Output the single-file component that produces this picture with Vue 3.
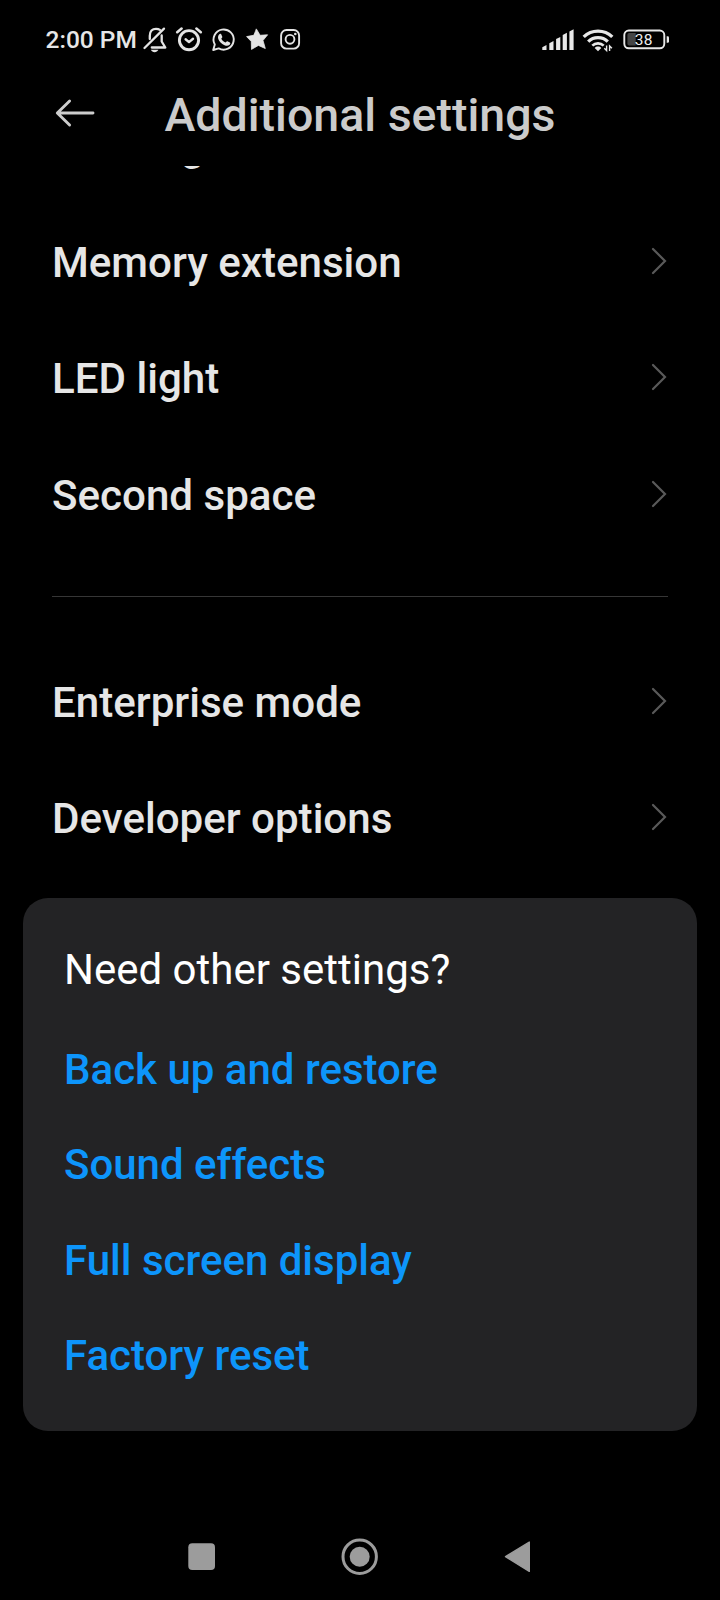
<script setup>
const deviceItems = ['Floating windows', 'Memory extension', 'LED light', 'Second space']
const advancedItems = ['Enterprise mode', 'Developer options']
const links = ['Back up and restore', 'Sound effects', 'Full screen display', 'Factory reset']
</script>

<template>
  <div class="screen">
    <div class="status">
      <span class="time">2:00 PM</span>
      <svg class="left-icons" viewBox="140 22 164 34" fill="none" stroke="#e4e4e4" stroke-linecap="round" stroke-linejoin="round">
        <g stroke-width="2.3">
          <path d="M144.500 48 164 28.600" />
          <path d="M149.800 39V35.700c0-4.500 2.500-6.900 6.200-6.900 1.500 0 2.800.3 3.900 1.100M161.700 35.500v6l3.600 6h-13.500" />
        </g>
        <path d="M150.8 49.800h7.600c-.8 1.500-2.100 2.400-3.800 2.400s-3-.9-3.800-2.400z" fill="#e4e4e4" stroke="none" />
        <g stroke-width="2.900">
          <circle cx="189" cy="40.200" r="9.600" />
          <path d="M185.600 39.300 189 42.100l4-3.300" stroke-width="2.400" />
          <path d="M177.200 32.200l4.400-3.600M196.400 28.600l4.400 3.600" stroke-width="2.600" />
        </g>
        <path d="M213.200 50l1.600-5.500a10.100 10.100 0 1 1 3.900 3.900z" stroke-width="1.900" />
        <path d="M219.300 34.300c.5-.6 1.500-.8 1.900 0l1.100 2.500c.3.700-.7 1.400-1 2 .9 1.700 2.300 3 4.100 3.700.7-.3 1.300-1.600 2-1.300l2.500 1.200c.8.400.3 1.800-.3 2.400-1.300 1.100-3 1.200-4.600.6-3.300-1.200-5.700-3.600-6.700-6.400-.5-1.700-.3-3.500 1-4.700z" fill="#e4e4e4" stroke="none" />
        <path d="M256.500 29.200l3.600 6.100 7.500-.5-4.600 5.700 2.300 8-6.900-3.100-6.900 4-.2-7.900-4.700-4.900 7-1.300z" fill="#e4e4e4" stroke-width=".8" />
        <g stroke-width="1.900">
          <rect x="281.100" y="30" width="18" height="18.600" rx="5.400" />
          <circle cx="290" cy="39.300" r="4.400" />
        </g>
        <circle cx="295.300" cy="34" r="1.300" fill="#e4e4e4" stroke="none" />
      </svg>
      <svg class="right-icons" viewBox="538 22 136 34" fill="none" stroke="#e8e8e8" stroke-linecap="round">
        <path d="M542.300 50v-2.700l4.200-2.200V50zM549.300 50v-6.700l4.200-2.200V50zM556.100 50V39.100l4.200-2.200V50zM562.700 50V35l4.200-2.200V50zM569.400 50V31.500l4.200-2.200V50z" fill="#e8e8e8" stroke="none" />
        <g stroke-width="3.300" stroke-linecap="butt">
          <path d="M583.700 36.900a20.500 20.500 0 0 1 28.600 0" />
          <path d="M588.200 41.600a14.200 14.200 0 0 1 19.600 0" />
          <path d="M592.300 45.600a8.200 8.200 0 0 1 11.400 0" stroke-width="2.700" />
        </g>
        <path d="M594.700 47.900c1.900-1.900 4.700-1.900 6.600 0L598 51.200z" fill="#e8e8e8" stroke="none" />
        <path d="M606.600 45.500v5l-2.300-2.200M609.600 51v-5l2.300 2.200" stroke-width="1.400" stroke-linecap="butt" />
        <path d="M629.200 33h6.500v12.600h-6.500a1.800 1.800 0 0 1-1.800-1.800v-9a1.800 1.800 0 0 1 1.800-1.800z" fill="#454545" stroke="none" />
        <rect x="624.300" y="30.500" width="40" height="17.800" rx="4.500" stroke-width="1.900" />
        <path d="M666.700 36.200h1a1.300 1.300 0 0 1 1.300 1.300v4a1.300 1.300 0 0 1-1.300 1.300h-1z" fill="#e8e8e8" stroke="none" />
        <text x="643.800" y="45.300" class="charge" text-anchor="middle">38</text>
      </svg>
    </div>

    <header class="header">
      <svg class="back" viewBox="0 0 44 30" fill="none" stroke="#cdcdcd" stroke-width="2.900" stroke-linecap="round" stroke-linejoin="round">
        <path d="M15.600 3 3.300 15l12.300 12M3.500 15H39" />
      </svg>
      <h1>Additional settings</h1>
    </header>

    <main class="content">
      <ul class="group first">
        <li v-for="item in deviceItems" :key="item" class="row">
          <span>{{ item }}</span>
          <svg viewBox="0 0 16 28" class="chevron"><path d="M2 2l12 12L2 26" /></svg>
        </li>
      </ul>
      <div class="divider"></div>
      <ul class="group">
        <li v-for="item in advancedItems" :key="item" class="row">
          <span>{{ item }}</span>
          <svg viewBox="0 0 16 28" class="chevron"><path d="M2 2l12 12L2 26" /></svg>
        </li>
      </ul>
      <section class="card">
        <h2>Need other settings?</h2>
        <a v-for="link in links" :key="link">{{ link }}</a>
      </section>
    </main>

    <nav class="nav">
      <svg viewBox="180 1530 360 54" fill="#9c9c9c">
        <rect x="188.300" y="1543.300" width="26.700" height="26.700" rx="4" />
        <circle cx="359.700" cy="1556.700" r="16.700" fill="none" stroke="#9c9c9c" stroke-width="3" />
        <circle cx="359.700" cy="1556.700" r="10" />
        <path d="M505.500 1556.700 529.300 1542v29.400z" stroke="#9c9c9c" stroke-width="1.400" stroke-linejoin="round" />
      </svg>
    </nav>
  </div>
</template>

<style>
html,
body {
  margin: 0;
  background: #000;
}
</style>

<style scoped>
.screen {
  width: 720px;
  height: 1600px;
  display: flex;
  flex-direction: column;
  overflow: hidden;
  background: #000;
  color: #e6e6e6;
  font-family: Roboto, "Liberation Sans", sans-serif;
}
.status {
  height: 56px;
  flex: none;
  display: flex;
  align-items: flex-start;
  padding: 22px 46px 0 45.5px;
  box-sizing: border-box;
}
.time {
  width: 94.5px;
  flex: none;
  font-size: 24.5px;
  font-weight: 500;
  line-height: 36px;
  white-space: nowrap;
}
.left-icons {
  width: 164px;
  height: 34px;
}
.right-icons {
  width: 136px;
  height: 34px;
  margin-left: auto;
}
.charge {
  font-size: 15.5px;
  font-weight: 400;
  letter-spacing: 0.3px;
  fill: #f0f0f0;
  stroke: none;
}
.header {
  height: 110px;
  flex: none;
  display: flex;
  align-items: flex-start;
  padding: 31px 0 0 53.5px;
  box-sizing: border-box;
}
.back {
  width: 44px;
  height: 30px;
  margin: 11px 67px 0 0;
}
h1 {
  margin: 0;
  font-size: 46.5px;
  font-weight: 500;
  line-height: 56px;
  color: #cbcbcb;
}
.content {
  height: 1316px;
  flex: none;
  overflow: hidden;
}
.group {
  margin: 0;
  padding: 0 53px 0 52px;
  list-style: none;
}
.first {
  margin-top: -78.5px;
}
.row {
  height: 116.6px;
  display: flex;
  align-items: center;
  justify-content: space-between;
}
.row span {
  padding-top: 1px;
  font-size: 42.1px;
  font-weight: 500;
  line-height: 50px;
}
.chevron {
  width: 16px;
  height: 28px;
  margin-top: -3px;
  fill: none;
  stroke: #595959;
  stroke-width: 2.2;
  stroke-linecap: round;
}
.divider {
  height: 1px;
  margin: 42px 52px 47px;
  background: #363636;
}
.card {
  box-sizing: border-box;
  height: 533px;
  margin: 21px 23px 0;
  padding: 47px 41px 0;
  border-radius: 25px;
  background: #232325;
}
h2 {
  margin: 0 0 28px;
  font-size: 42px;
  font-weight: 400;
  line-height: 50px;
  color: #fff;
}
.card a {
  display: block;
  height: 95.4px;
  font-size: 42px;
  font-weight: 500;
  line-height: 94px;
  color: #0d95fb;
}
.nav {
  height: 118px;
  flex: none;
  padding: 48px 180px 0;
  box-sizing: border-box;
}
.nav svg {
  display: block;
  width: 360px;
  height: 54px;
}
</style>
